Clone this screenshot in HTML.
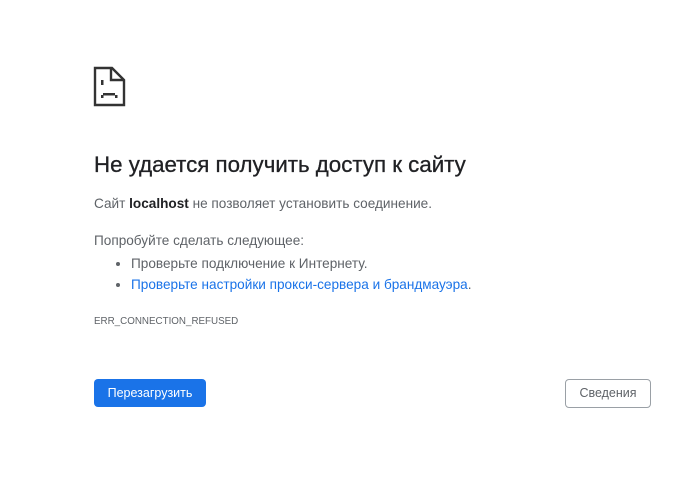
<!DOCTYPE html>
<html><head><meta charset="utf-8"><style>
body{margin:0;width:700px;height:483px;background:#fff;font-family:"Liberation Sans","DejaVu Sans",sans-serif;color:#5f6368;position:relative;overflow:hidden}
.a{position:absolute;white-space:nowrap}
h1{position:absolute;left:94px;top:152px;margin:0;font-size:22.3px;font-weight:normal;color:#202124;-webkit-text-stroke:0.3px #202124}
.t{font-size:13.6px}
b{color:#202124}
ul{position:absolute;left:94px;top:253px;margin:0;padding-left:37px;font-size:13.6px;line-height:21px}
a{color:#1a73e8;text-decoration:none}
.btn1{position:absolute;left:94px;top:379px;width:112px;height:28px;background:#1a73e8;border-radius:4px;color:#fff;font-size:12.5px;text-align:center;line-height:28px}
.btn2{position:absolute;left:565px;top:379px;width:84px;height:27px;border:1px solid #9aa0a6;border-radius:4px;color:#5f6368;font-size:12.5px;text-align:center;line-height:27px}
</style></head><body>
<svg class="a" style="left:92px;top:66px" width="36" height="42" viewBox="0 0 36 42">
<path d="M3 2H20L32 14V39H3Z" fill="none" stroke="#333" stroke-width="2.4"/>
<path d="M19 2V14H32" fill="none" stroke="#333" stroke-width="2.4"/>
<rect x="9" y="14" width="2.5" height="5" fill="#333"/>
<rect x="11" y="27" width="12" height="2.5" fill="#333"/><rect x="9" y="29" width="2.5" height="3" fill="#333"/><rect x="23" y="29" width="2.5" height="3" fill="#333"/>
</svg>
<h1>Не удается получить доступ к сайту</h1>
<div class="a t" style="left:94px;top:196px">Сайт <b>localhost</b> не позволяет установить соединение.</div>
<div class="a t" style="left:94px;top:233px">Попробуйте сделать следующее:</div>
<ul><li>Проверьте подключение к Интернету.</li><li><a>Проверьте настройки прокси-сервера и брандмауэра</a>.</li></ul>
<div class="a" style="left:94px;top:316px;font-size:9.8px">ERR_CONNECTION_REFUSED</div>
<div class="btn1">Перезагрузить</div>
<div class="btn2">Сведения</div>
</body></html>
